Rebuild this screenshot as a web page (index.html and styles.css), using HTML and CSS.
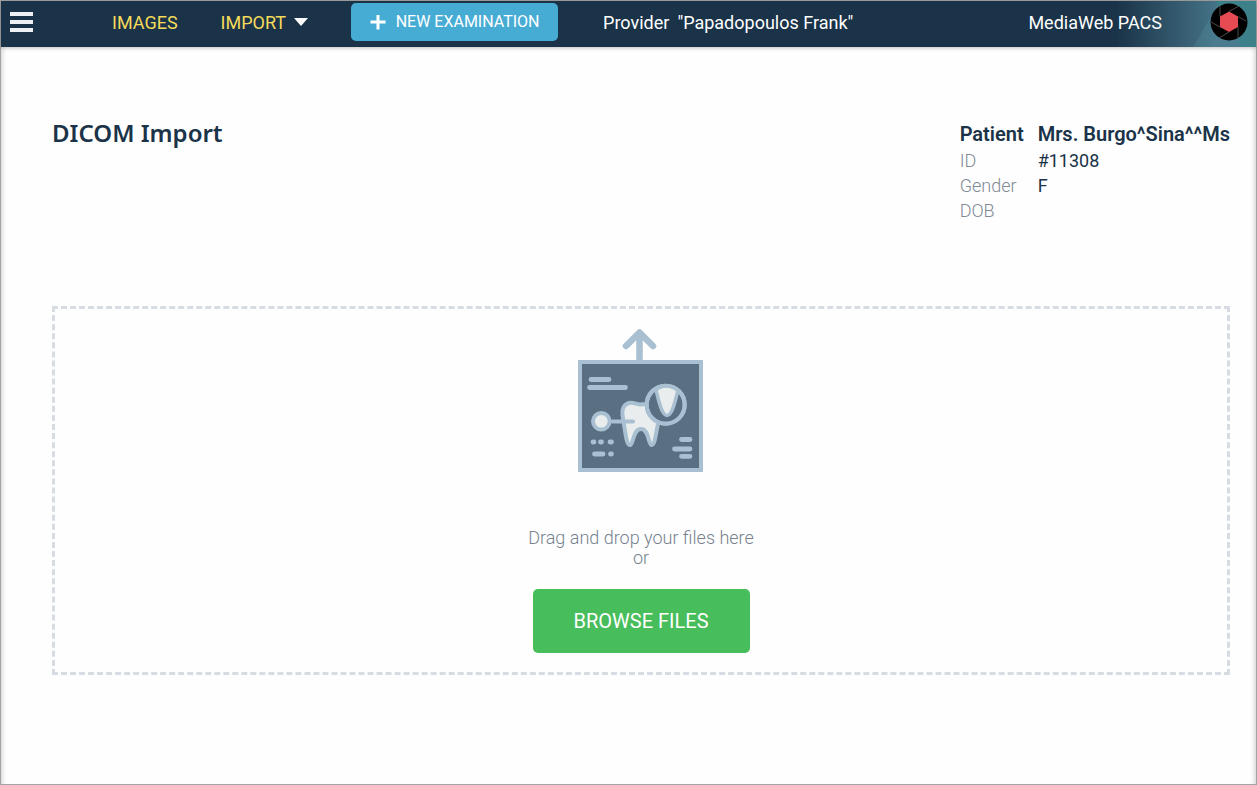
FILE: index.html
```html
<!DOCTYPE html>
<html lang="en">
<head>
<meta charset="utf-8">
<meta name="viewport" content="width=device-width, initial-scale=1">
<title>DICOM Import</title>
<link rel="stylesheet" href="styles.css">
</head>
<body>
<div class="app">
  <header class="topbar">
    <button class="menu-button" type="button" aria-label="Menu">
      <svg width="24" height="20" viewBox="0 0 24 20" fill="#edf1f5"><path d="M0 0h23v4H0zM0 8h23v4H0zM0 16h23v4H0z"/></svg>
    </button>
    <nav class="nav">
      <a class="nav-link" href="#images">IMAGES</a>
      <a class="nav-link nav-import" href="#import">IMPORT
        <svg width="14" height="8" viewBox="0 0 14 8" fill="#fff"><path d="M0 0h14L7 8z"/></svg>
      </a>
    </nav>
    <button class="new-exam" type="button">
      <svg width="16" height="16" viewBox="0 0 16 16" fill="#fff"><path d="M6.500 1h3v5.500H15.500v3H9.500V15.500h-3V9.500H.5v-3h6z"/></svg>
      <span>NEW EXAMINATION</span>
    </button>
    <div class="provider"><span>Provider</span><span>"Papadopoulos Frank"</span></div>
    <div class="brand">
      <span>MediaWeb PACS</span>
      <svg class="logo" width="38" height="38" viewBox="0 0 38 38">
        <circle cx="19" cy="19" r="18.500" fill="#000"/>
        <path d="M19 8.500 10 13.500 V24 L19 29 28 24 V13.500Z" fill="#e64a52"/>
        <path d="M10 13.500V3M19 8.500 29 3M28 13.500 36 18M28 24V35M19 29 9 35M10 24 1 19" fill="none" stroke="#5a5a5a" stroke-width=".8"/>
      </svg>
    </div>
  </header>
  <main class="content">
    <div class="heading">
      <h1 class="title">DICOM Import</h1>
      <dl class="patient">
        <dt class="patient-main">Patient</dt><dd class="patient-main">Mrs. Burgo^Sina^^Ms</dd>
        <dt>ID</dt><dd>#11308</dd>
        <dt>Gender</dt><dd>F</dd>
        <dt>DOB</dt><dd></dd>
      </dl>
    </div>
    <section class="dropzone">
      <svg class="upload-art" width="126" height="144" viewBox="18 8 126 144" fill="none" stroke="#a8c0d1" stroke-width="4" stroke-linecap="round" stroke-linejoin="round">
        <path d="M79.500 42V13M66 26 79.500 12.500 93 26" stroke-width="6.500"/>
        <path d="M20 42h121v108H20z" fill="#5a6f82" stroke-linejoin="miter"/>
        <path d="M31 59.500H49M29.500 67.500H65.500M33 122h1M40.500 122h1M50 122h1.500M34.500 134H43M50.500 134h1M121.500 119.500H130M114.500 129H130M121.500 136.300H130" stroke-width="4.800"/>
        <path d="M80 84.500C76 84 73 82 69 83C64 84.500 61.500 89 62.500 95C63.500 101 64.500 108 65.500 114C66.500 121 68 125.500 70.300 125C73.500 124 73 109 81 109C89 109 88 124 91.500 125C95.500 124.500 95.500 113 98.500 102L87 84Z" fill="#e9eded"/>
        <path d="M52 101.500H73"/>
        <circle cx="41.300" cy="101.300" r="8.300" fill="#e9eded"/>
        <circle cx="105.700" cy="84.700" r="19" fill="#5a6f82"/>
        <path d="M96 70Q105.500 61.500 118 70C115.500 80 112.500 95.500 107 95.500C101.500 95.500 98.500 80 96 70Z" fill="#e9eded" stroke-width="3.500"/>
        <circle cx="105.700" cy="84.700" r="19"/>
      </svg>
      <p class="hint">Drag and drop your files here<br>or</p>
      <button class="browse" type="button">BROWSE FILES</button>
    </section>
  </main>
</div>
</body>
</html>
```
FILE: styles.css
```css
* {
  box-sizing: border-box;
}

body {
  margin: 0;
  background: #fefefe;
  color: #1a3348;
  font-family: Roboto, "Liberation Sans", sans-serif;
  font-size: 18px;
}

button {
  border: 0;
  font-family: inherit;
  cursor: pointer;
}

.app {
  min-height: 100vh;
  border: 1px solid #a3a3a3;
  box-shadow: inset 5px 0 5px -4px rgba(0, 0, 0, 0.2), inset -5px 0 5px -4px rgba(0, 0, 0, 0.2);
}

.topbar {
  display: flex;
  align-items: center;
  height: 46px;
  padding: 0 8px 4px 9px;
  background:
    linear-gradient(60deg, transparent 50%, rgba(47, 133, 133, 0.5) 51%) right / 56px 100% no-repeat,
    linear-gradient(120deg, transparent 50%, rgba(100, 160, 175, 0.2) 51%) right / 100px 100% no-repeat,
    linear-gradient(90deg, #1a3348 0, #1a3348 calc(100% - 140px), #447286 calc(100% - 40px));
  color: #fff;
  box-shadow: 0 1px 4px rgba(0, 0, 0, 0.25);
}

.menu-button {
  display: flex;
  padding: 0;
  background: transparent;
}

.nav {
  display: flex;
  gap: 43px;
  margin-left: 78px;
}

.nav-link {
  color: #f5da5b;
  text-decoration: none;
}

.nav-import {
  display: flex;
  align-items: center;
  gap: 8px;
}

.new-exam {
  display: flex;
  align-items: center;
  justify-content: center;
  gap: 10px;
  width: 207px;
  height: 38px;
  margin-left: 43px;
  padding: 0 0 1px;
  border-radius: 5px;
  background: #47acd4;
  color: #fff;
  font-size: 16px;
}

.provider {
  display: flex;
  gap: 8px;
  margin-left: 45px;
}

.brand {
  display: flex;
  align-items: center;
  gap: 48px;
  margin-left: auto;
}

.content {
  padding: 71px 26px 0 51px;
}

.heading {
  display: flex;
  justify-content: space-between;
  min-height: 188px;
}

.title {
  margin: 0;
  font-family: "Noto Sans", "Open Sans", sans-serif;
  font-size: 24px;
  font-weight: 600;
  line-height: 30px;
}

.patient {
  display: grid;
  grid-template-columns: auto auto;
  grid-auto-rows: 25px;
  align-content: start;
  column-gap: 14px;
  margin: 4px 0 0;
  line-height: 25px;
}

.patient dt {
  color: #7f8a95;
  font-weight: 300;
}

.patient dd {
  margin: 0;
}

.patient {
  grid-template-rows: 26px;
}

.patient .patient-main {
  color: #1a3348;
  font-size: 20px;
  font-weight: 600;
}

.dropzone {
  display: flex;
  flex-direction: column;
  align-items: center;
  padding: 19px 20px;
  border: 3px dashed #d6dce1;
}

.hint {
  margin: 56px 0 21px;
  color: #76828e;
  font-weight: 300;
  line-height: 20px;
  text-align: center;
}

.browse {
  width: 217px;
  height: 64px;
  border-radius: 5px;
  background: #48bd5b;
  color: #fff;
  font-size: 20px;
}
```
